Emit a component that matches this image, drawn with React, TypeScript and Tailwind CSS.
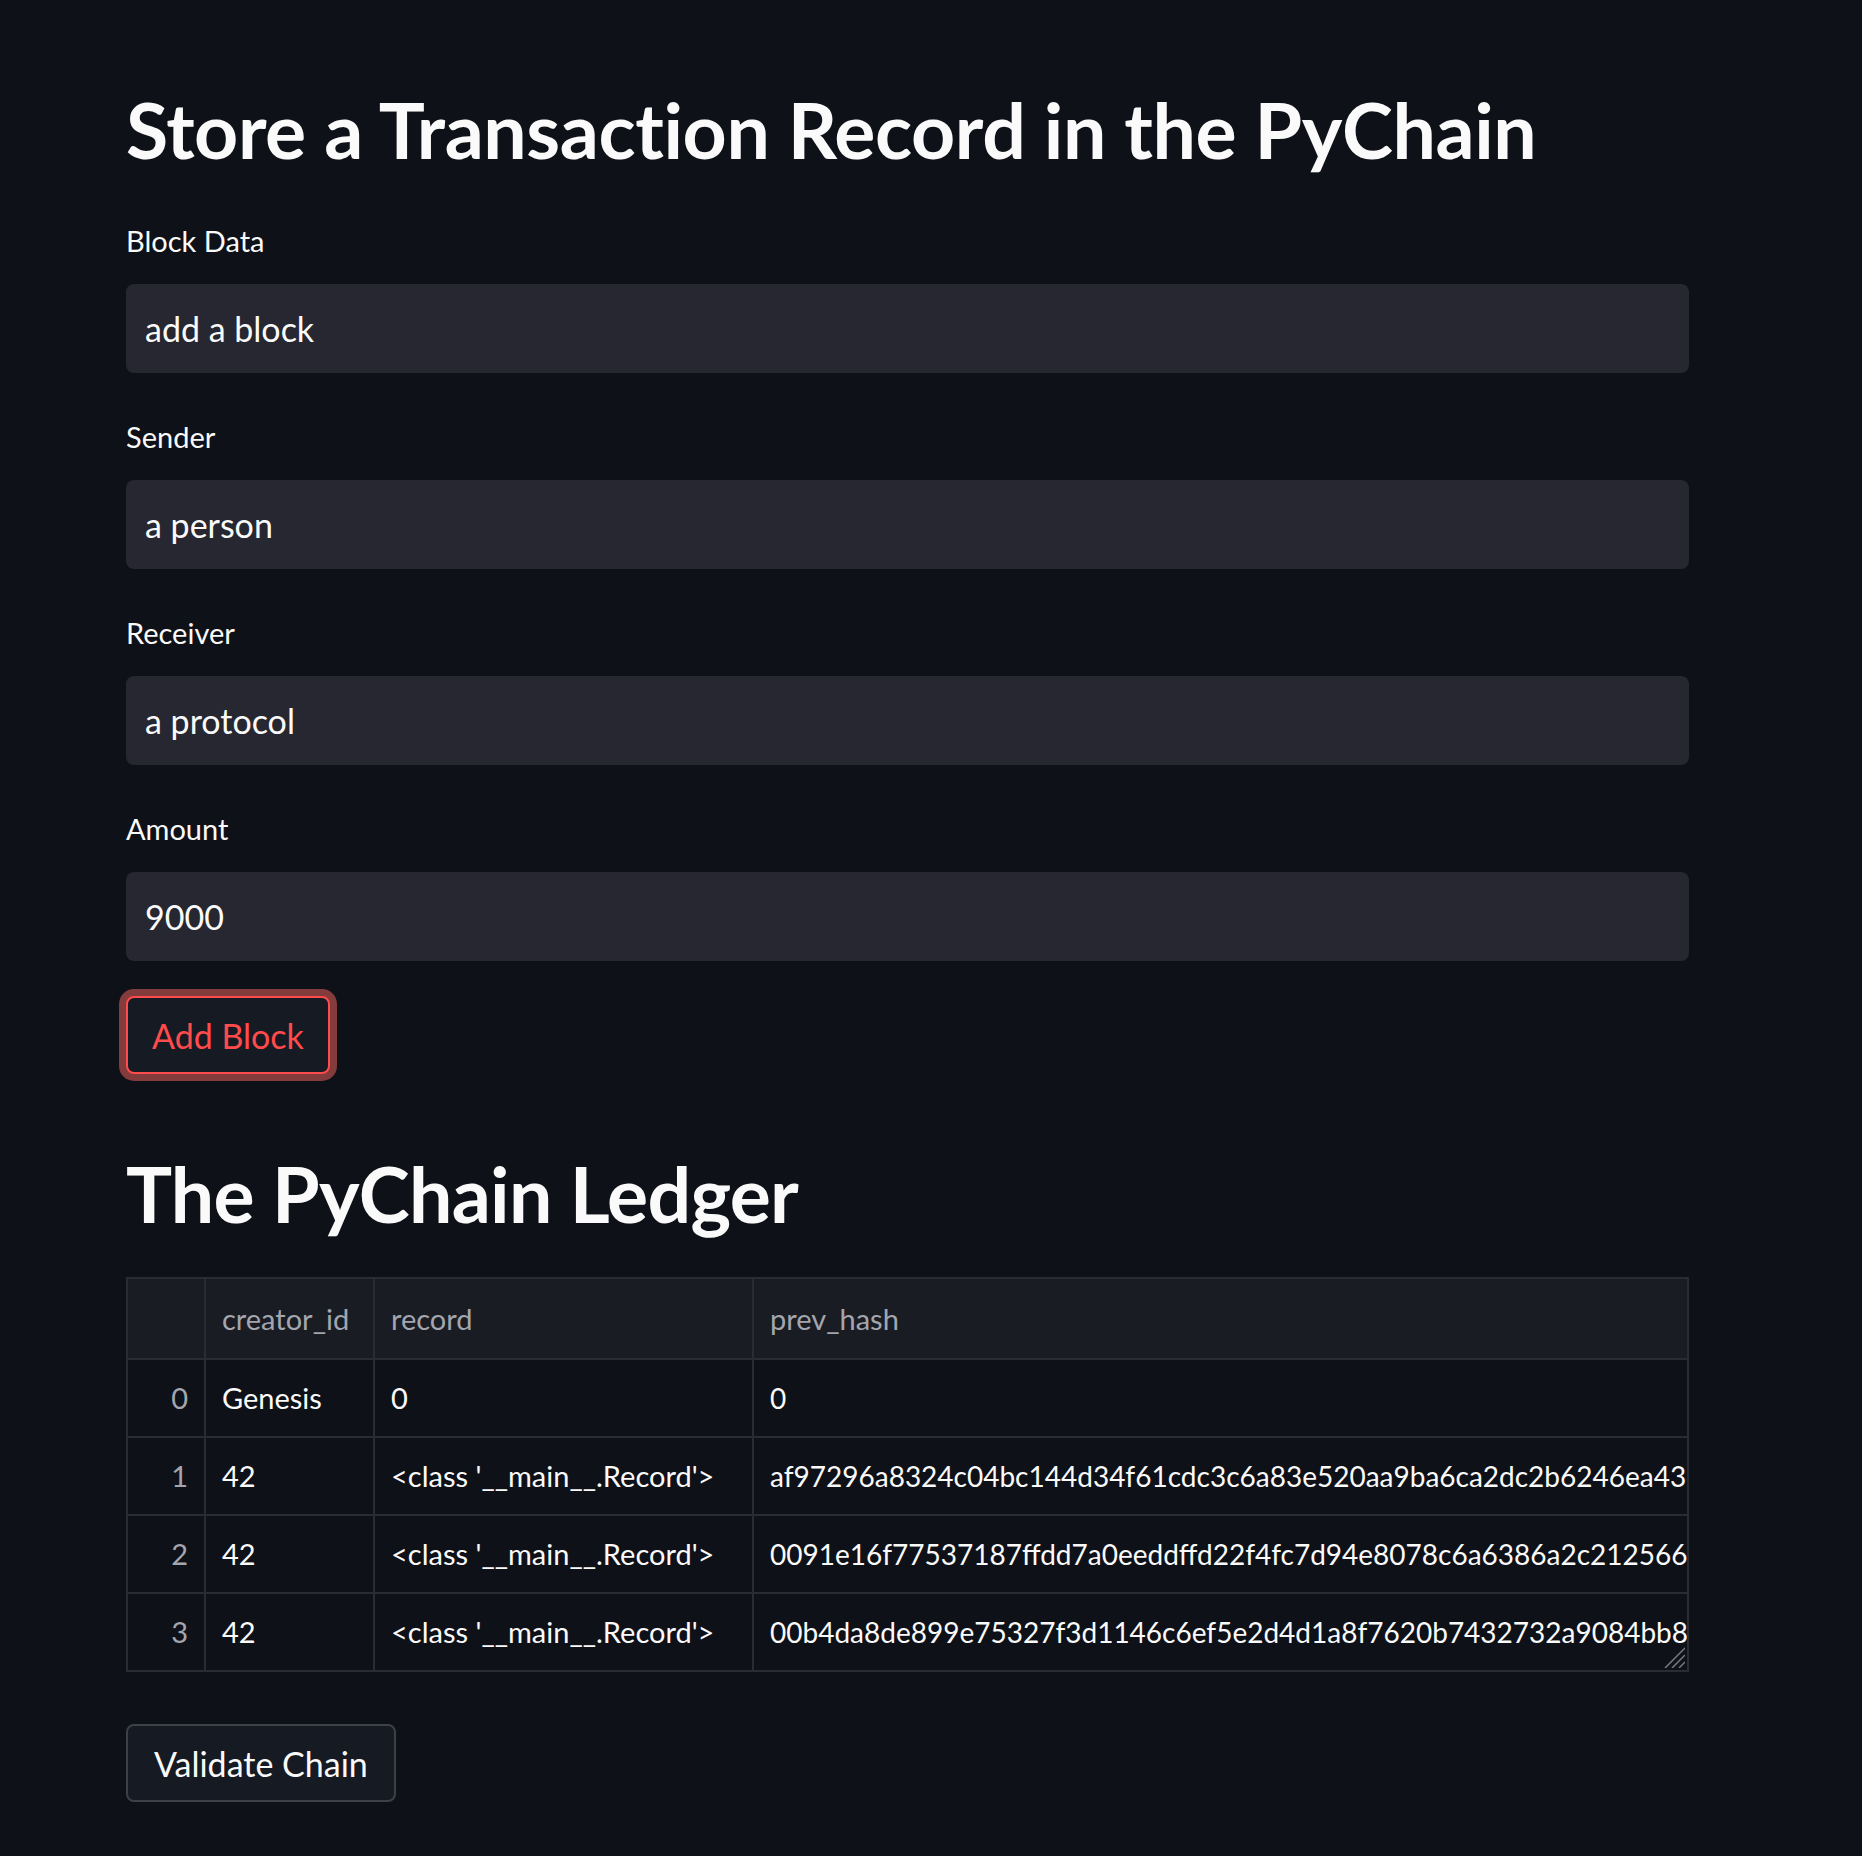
import React from 'react';

const font = { fontFamily: 'Lato, "Noto Sans", sans-serif' };

interface FieldProps {
  label: string;
  value: string;
}

function Field({ label, value }: FieldProps) {
  return (
    <div className="flex flex-col">
      <label className="flex h-[44px] items-center text-[29px] leading-none text-[#fafafa]">{label}</label>
      <div className="mt-[22px] flex h-[89px] items-center rounded-[8px] bg-[#262730] px-[19px] text-[34px] text-[#fafafa]">
        {value}
      </div>
    </div>
  );
}

const rows = [
  { idx: 0, creator: 'Genesis', record: '0', hash: '0' },
  {
    idx: 1,
    creator: '42',
    record: "<class '__main__.Record'>",
    hash: 'af97296a8324c04bc144d34f61cdc3c6a83e520aa9ba6ca2dc2b6246ea43e1f2',
  },
  {
    idx: 2,
    creator: '42',
    record: "<class '__main__.Record'>",
    hash: '0091e16f77537187ffdd7a0eeddffd22f4fc7d94e8078c6a6386a2c2125664a9',
  },
  {
    idx: 3,
    creator: '42',
    record: "<class '__main__.Record'>",
    hash: '00b4da8de899e75327f3d1146c6ef5e2d4d1a8f7620b7432732a9084bb8ac31d',
  },
];

function Ledger() {
  return (
    <div className="relative w-full overflow-hidden border-2 border-[#2a2c34] text-[29px]">
      {/* header */}
      <div className="flex h-[81px] border-b-2 border-[#2a2c34] bg-[#1a1c24] text-[#a3a6ae]">
        <div className="w-[78px] shrink-0 border-r-2 border-[#2a2c34]" />
        <div className="flex w-[169px] shrink-0 items-center border-r-2 border-[#2a2c34] px-[16px]">creator_id</div>
        <div className="flex w-[379px] shrink-0 items-center border-r-2 border-[#2a2c34] px-[16px]">record</div>
        <div className="flex min-w-0 flex-1 items-center px-[16px]">prev_hash</div>
      </div>
      {rows.map((r, i) => (
        <div
          key={r.idx}
          className={
            i < rows.length - 1
              ? 'flex h-[78px] border-b-2 border-[#2a2c34] text-[#fafafa]'
              : 'flex h-[76px] text-[#fafafa]'
          }
        >
          <div className="flex w-[78px] shrink-0 items-center justify-end border-r-2 border-[#2a2c34] px-[16px] text-[#a3a6ae]">
            {r.idx}
          </div>
          <div className="flex w-[169px] shrink-0 items-center border-r-2 border-[#2a2c34] px-[16px]">{r.creator}</div>
          <div className="flex w-[379px] shrink-0 items-center whitespace-nowrap border-r-2 border-[#2a2c34] px-[16px]">
            {r.record}
          </div>
          <div className="flex min-w-0 flex-1 items-center overflow-hidden whitespace-nowrap pl-[16px] text-[28px]">
            {r.hash}
          </div>
        </div>
      ))}
      {/* resize grip */}
      <svg className="absolute bottom-[2px] right-[2px]" width="22" height="22" viewBox="0 0 22 22">
        <g stroke="#7a7d85" strokeWidth="1.5">
          <line x1="2" y1="22" x2="22" y2="2" />
          <line x1="9" y1="22" x2="22" y2="9" />
          <line x1="16" y1="22" x2="22" y2="16" />
        </g>
      </svg>
    </div>
  );
}

export default function App() {
  return (
    <div className="min-h-[1856px] w-full bg-[#0e1117]" style={font}>
      <div className="ml-[126px] flex w-[1563px] flex-col pt-[91px]">
        <h1 className="text-[77px] font-bold leading-none tracking-[-0.4px] text-[#fafafa]">
          Store a Transaction Record in the PyChain
        </h1>

        <div className="mt-[50px] flex flex-col gap-[41px]">
          <Field label="Block Data" value="add a block" />
          <Field label="Sender" value="a person" />
          <Field label="Receiver" value="a protocol" />
          <Field label="Amount" value="9000" />
        </div>

        <div className="mt-[35px]">
          <button
            type="button"
            className="h-[78px] rounded-[8px] border-2 border-[#ff4b4b] bg-[#161a23] px-[24px] text-[34px] text-[#ff4b4b] ring-[7px] ring-[#843b3b]"
          >
            Add Block
          </button>
        </div>

        <h2 className="mt-[81px] text-[77px] font-bold leading-none tracking-[-0.7px] text-[#fafafa]">
          The PyChain Ledger
        </h2>

        <div className="mt-[45px]">
          <Ledger />
        </div>

        <div className="mt-[52px]">
          <button
            type="button"
            className="h-[78px] rounded-[8px] border-2 border-[#3d4049] bg-[#161a23] px-[26px] text-[34px] text-[#fafafa]"
          >
            Validate Chain
          </button>
        </div>
      </div>
    </div>
  );
}
